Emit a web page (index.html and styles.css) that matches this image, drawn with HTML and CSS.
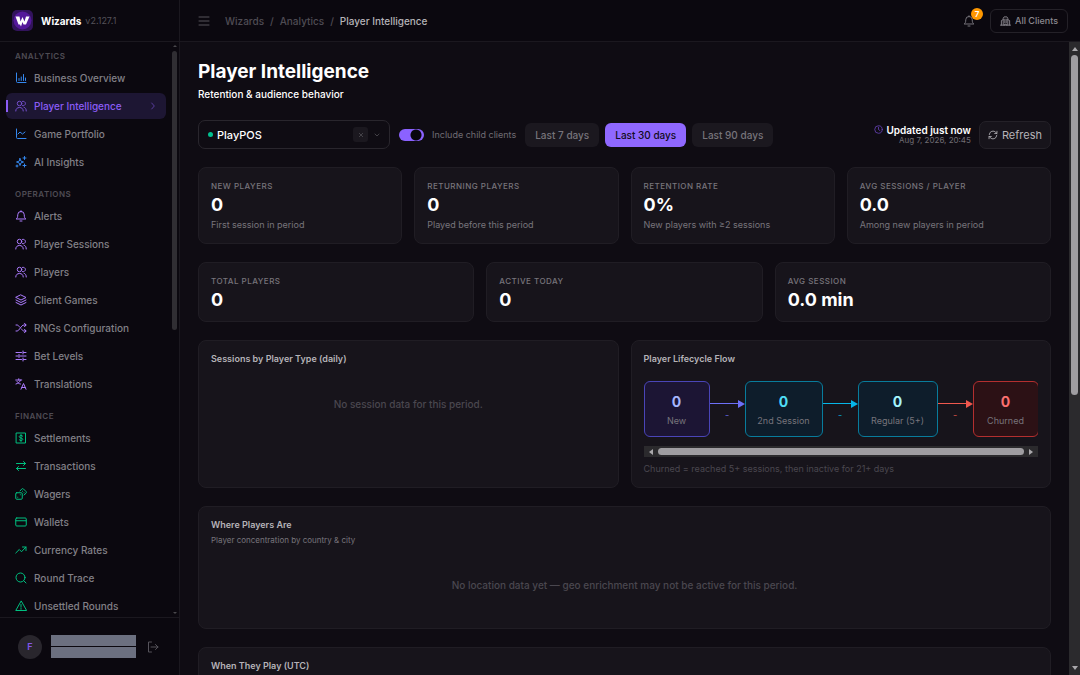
FILE: index.html
```html
<!DOCTYPE html>
<html lang="en">
<head>
<meta charset="utf-8">
<title>Player Intelligence</title>
<link rel="stylesheet" href="styles.css">
</head>
<body>
<svg class="sprite" aria-hidden="true">
  <symbol id="i-bars" viewBox="0 0 24 24"><path d="M3 2v17a2 2 0 0 0 2 2h17M8 17v-4M12.500 17v-7M17 17V5M21 17v-5"/></symbol>
  <symbol id="i-users" viewBox="0 0 24 24"><circle cx="9" cy="7" r="4.500"/><path d="M1.500 22c0-4.500 3-7 7.500-7s7.500 2.500 7.500 7M15 2.700a4.500 4.500 0 1 1 0 8.600M18 14.500c3 .8 4.500 3.500 4.500 7.500"/></symbol>
  <symbol id="i-line" viewBox="0 0 24 24"><path d="M3 2v17a2 2 0 0 0 2 2h17M6 12l4-4 5 4 5-4"/></symbol>
  <symbol id="i-spark" viewBox="0 0 24 24"><path d="M10 5l1.800 5.200L17 12l-5.200 1.800L10 19l-1.800-5.200L3 12l5.200-1.800zM19 1v6M16 4h6M19 16v6M16 19h6M4 18v4M2 20h4"/></symbol>
  <symbol id="i-bell" viewBox="0 0 24 24"><path d="M3 17.500c2-1.500 2.500-3.500 2.500-8a6.500 6.500 0 0 1 13 0c0 4.500.5 6.500 2.500 8zM10 22h4M12 1.500v2"/></symbol>
  <symbol id="i-layers" viewBox="0 0 24 24"><path d="M12 2l10 5-10 5L2 7zM2 12l10 5 10-5M2 17l10 5 10-5"/></symbol>
  <symbol id="i-shuffle" viewBox="0 0 24 24"><path d="M2 18h2c5 0 8-12 14-12h4M2 6h2c2 0 3.500 1.500 5 4M13 14c1.500 2.500 3 4 5 4h4M19 2.500L22 6l-3 3.500M19 14.500l3 3.500-3 3.500"/></symbol>
  <symbol id="i-sliders" viewBox="0 0 24 24"><path d="M2 5h11M17 5h5M2 12h4M10 12h12M2 19h11M17 19h5M16 2v6M8 9v6M16 16v6"/></symbol>
  <symbol id="i-translate" viewBox="0 0 24 24"><path d="M1.500 4h12M7.500 1.500V4M11 4c-1 4-4.500 7-9 8M4 7c1.500 3 4 4.500 7 5M12 22.500l5-11.500 5 11.500M13.500 19h7"/></symbol>
  <symbol id="i-receipt" viewBox="0 0 24 24"><path d="M3 2h18v20H3zM15.500 8.500c-.8-1-2-1.500-3.500-1.500-2 0-3.500.8-3.500 2.500C8.500 13 15.500 11 15.500 14.500c0 1.700-1.500 2.500-3.500 2.500-1.500 0-2.700-.5-3.500-1.500M12 5v14"/></symbol>
  <symbol id="i-swap" viewBox="0 0 24 24"><path d="M3 7h18M17 3l4 4-4 4M21 17H3M7 13l-4 4 4 4"/></symbol>
  <symbol id="i-dice" viewBox="0 0 24 24"><rect x="1.500" y="9.500" width="13" height="13" rx="2"/><path d="M10 6l3.500-4a2.500 2.500 0 0 1 3.500 0l5 5a2.500 2.500 0 0 1 0 3.500L18 14M5.500 18.500h.1M10.500 13.500h.1M15 6.500h.1M18 9.500h.1"/></symbol>
  <symbol id="i-card" viewBox="0 0 24 24"><rect x="1.500" y="4" width="21" height="16" rx="2"/><path d="M2 9.500h20"/></symbol>
  <symbol id="i-trend" viewBox="0 0 24 24"><path d="M1.500 18l7-7 4.500 4.500L22 6M15 6h7v7"/></symbol>
  <symbol id="i-search" viewBox="0 0 24 24"><circle cx="11" cy="11" r="9"/><path d="M17.500 17.500L22 22"/></symbol>
  <symbol id="i-alert" viewBox="0 0 24 24"><path d="M12 2.500L1.500 21h21zM12 9v5.500M12 17v1.500"/></symbol>
  <symbol id="i-chev" viewBox="0 0 24 24"><path d="M8 3l8 9-8 9"/></symbol>
  <symbol id="i-down" viewBox="0 0 24 24"><path d="M4 8l8 8 8-8"/></symbol>
  <symbol id="i-x" viewBox="0 0 24 24"><path d="M5 5l14 14M19 5L5 19"/></symbol>
  <symbol id="i-menu" viewBox="0 0 24 24"><path d="M2 4h20M2 12h20M2 20h20"/></symbol>
  <symbol id="i-logout" viewBox="0 0 24 24"><path d="M9 2H3v20h6M8 12h14M17 7l5 5-5 5"/></symbol>
  <symbol id="i-building" viewBox="0 0 24 24"><path d="M1 21h22M3 21V11l4-2M7 21V6l2-3h6l2 3v15M17 9l4 2v10M10.500 8v8M13.500 8v8M10 21v-2h4v2"/></symbol>
  <symbol id="i-clock" viewBox="0 0 24 24"><circle cx="12" cy="12" r="10"/><path d="M12 6v6l4 3"/></symbol>
  <symbol id="i-refresh" viewBox="0 0 24 24"><path d="M3 11a9 9 0 0 1 16-5l2.500 2.500M21.500 3v5.500H16M21 13a9 9 0 0 1-16 5l-2.500-2.500M2.500 21v-5.500H8"/></symbol>
</svg>

<div class="app">
  <aside class="sidebar">
    <div class="brand">
      <svg class="logo" viewBox="0 0 42 42" aria-hidden="true"><rect width="42" height="42" rx="10" fill="#32135c"/><circle cx="21" cy="21" r="18" fill="#54189a"/><path d="M7 13h8l2 10 4-9 4 9 3-10h7l-7 16h-5l-2-5-3 9-2-4-3 0z" fill="#fff"/></svg>
      <strong class="brand-name">Wizards</strong>
      <span class="version">v2.127.1</span>
    </div>
    <div class="nav-wrap">
      <nav class="nav">
        <section class="group blue">
          <h2>ANALYTICS</h2>
          <a href="#"><svg class="ico"><use href="#i-bars"/></svg>Business Overview</a>
          <a href="#" class="active" aria-current="page"><svg class="ico"><use href="#i-users"/></svg>Player Intelligence<svg class="ico chev"><use href="#i-chev"/></svg></a>
          <a href="#"><svg class="ico"><use href="#i-line"/></svg>Game Portfolio</a>
          <a href="#"><svg class="ico"><use href="#i-spark"/></svg>AI Insights</a>
        </section>
        <section class="group purple">
          <h2>OPERATIONS</h2>
          <a href="#"><svg class="ico"><use href="#i-bell"/></svg>Alerts</a>
          <a href="#"><svg class="ico"><use href="#i-users"/></svg>Player Sessions</a>
          <a href="#"><svg class="ico"><use href="#i-users"/></svg>Players</a>
          <a href="#"><svg class="ico"><use href="#i-layers"/></svg>Client Games</a>
          <a href="#"><svg class="ico"><use href="#i-shuffle"/></svg>RNGs Configuration</a>
          <a href="#"><svg class="ico"><use href="#i-sliders"/></svg>Bet Levels</a>
          <a href="#"><svg class="ico"><use href="#i-translate"/></svg>Translations</a>
        </section>
        <section class="group green">
          <h2>FINANCE</h2>
          <a href="#"><svg class="ico"><use href="#i-receipt"/></svg>Settlements</a>
          <a href="#"><svg class="ico"><use href="#i-swap"/></svg>Transactions</a>
          <a href="#"><svg class="ico"><use href="#i-dice"/></svg>Wagers</a>
          <a href="#"><svg class="ico"><use href="#i-card"/></svg>Wallets</a>
          <a href="#"><svg class="ico"><use href="#i-trend"/></svg>Currency Rates</a>
          <a href="#"><svg class="ico"><use href="#i-search"/></svg>Round Trace</a>
          <a href="#"><svg class="ico"><use href="#i-alert"/></svg>Unsettled Rounds</a>
        </section>
      </nav>
      <div class="side-bar" aria-hidden="true"><i class="tri up"></i><div class="track"><div class="thumb"></div></div><i class="tri down"></i></div>
    </div>
    <div class="account">
      <span class="avatar">F</span>
      <div class="masked"><span></span><span></span></div>
      <button class="plain" aria-label="Log out"><svg class="ico"><use href="#i-logout"/></svg></button>
    </div>
  </aside>

  <div class="page">
    <header class="topbar">
      <button class="plain menu" aria-label="Toggle menu"><svg class="ico"><use href="#i-menu"/></svg></button>
      <nav class="crumbs" aria-label="Breadcrumb"><a href="#">Wizards</a><span>/</span><a href="#">Analytics</a><span>/</span><b>Player Intelligence</b></nav>
      <button class="plain bell" aria-label="Notifications"><svg class="ico"><use href="#i-bell"/></svg><span class="badge">7</span></button>
      <button class="clients"><svg class="ico"><use href="#i-building"/></svg>All Clients</button>
    </header>

    <div class="scroll-area">
      <main class="content">
        <div class="heading">
          <h1>Player Intelligence</h1>
          <p>Retention &amp; audience behavior</p>
        </div>

        <div class="toolbar">
          <div class="client-pick">
            <span class="dot"></span>
            <select aria-label="Client"><option>PlayPOS</option></select>
            <button class="clear" aria-label="Clear client"><svg class="ico"><use href="#i-x"/></svg></button>
            <svg class="ico arrow"><use href="#i-down"/></svg>
          </div>
          <label class="switch"><input type="checkbox" role="switch" checked>Include child clients</label>
          <div class="ranges">
            <button>Last 7 days</button>
            <button class="on">Last 30 days</button>
            <button>Last 90 days</button>
          </div>
          <div class="updated">
            <strong><svg class="ico"><use href="#i-clock"/></svg>Updated just now</strong>
            <time>Aug 7, 2026, 20:45</time>
          </div>
          <button class="refresh"><svg class="ico"><use href="#i-refresh"/></svg>Refresh</button>
        </div>

        <div class="grid four">
          <section class="card stat"><h3>NEW PLAYERS</h3><strong>0</strong><p>First session in period</p></section>
          <section class="card stat"><h3>RETURNING PLAYERS</h3><strong>0</strong><p>Played before this period</p></section>
          <section class="card stat"><h3>RETENTION RATE</h3><strong>0%</strong><p>New players with ≥2 sessions</p></section>
          <section class="card stat"><h3>AVG SESSIONS / PLAYER</h3><strong>0.0</strong><p>Among new players in period</p></section>
        </div>

        <div class="grid three">
          <section class="card stat"><h3>TOTAL PLAYERS</h3><strong>0</strong></section>
          <section class="card stat"><h3>ACTIVE TODAY</h3><strong>0</strong></section>
          <section class="card stat"><h3>AVG SESSION</h3><strong>0.0 min</strong></section>
        </div>

        <div class="grid two">
          <section class="card">
            <h3 class="title">Sessions by Player Type (daily)</h3>
            <p class="empty">No session data for this period.</p>
          </section>
          <section class="card">
            <h3 class="title">Player Lifecycle Flow</h3>
            <div class="flow">
              <div class="node new"><b>0</b><span>New</span></div>
              <div class="link l-new"><svg viewBox="0 0 35 8"><path d="M0 3.500h30" stroke="currentColor" stroke-width="1"/><path d="M28 0l7 4-7 4z" fill="currentColor"/></svg><span>-</span></div>
              <div class="node second"><b>0</b><span>2nd Session</span></div>
              <div class="link l-second"><svg viewBox="0 0 35 8"><path d="M0 3.500h30" stroke="currentColor" stroke-width="1"/><path d="M28 0l7 4-7 4z" fill="currentColor"/></svg><span>-</span></div>
              <div class="node regular"><b>0</b><span>Regular (5+)</span></div>
              <div class="link l-churn"><svg viewBox="0 0 35 8"><path d="M0 3.500h30" stroke="currentColor" stroke-width="1"/><path d="M28 0l7 4-7 4z" fill="currentColor"/></svg><span>-</span></div>
              <div class="node churned"><b>0</b><span>Churned</span></div>
            </div>
            <div class="h-bar" aria-hidden="true"><i class="tri left"></i><div class="thumb"></div><i class="tri right"></i></div>
            <p class="note">Churned = reached 5+ sessions, then inactive for 21+ days</p>
          </section>
        </div>

        <section class="card">
          <h3 class="title">Where Players Are</h3>
          <p class="sub">Player concentration by country &amp; city</p>
          <p class="empty geo">No location data yet — geo enrichment may not be active for this period.</p>
        </section>

        <section class="card">
          <h3 class="title">When They Play (UTC)</h3>
          <p class="empty geo"></p>
        </section>
      </main>
      <div class="v-bar" aria-hidden="true"><i class="tri up"></i><div class="track"><div class="thumb"></div></div><i class="tri down"></i></div>
    </div>
  </div>
</div>
</body>
</html>
```
FILE: styles.css
```css
* { box-sizing: border-box; }
body, h1, h2, h3, p { margin: 0; }
body {
  background: #0f0c13;
  color: #fff;
  font-family: Inter, "Liberation Sans", sans-serif;
  font-size: 9px;
  line-height: 12px;
}
button, select, input { font: inherit; color: inherit; margin: 0; }
button { border: 0; background: none; padding: 0; display: flex; align-items: center; }
a { color: inherit; text-decoration: none; }
.sprite { display: none; }
.ico {
  width: 12px;
  height: 12px;
  flex: none;
  fill: none;
  stroke: currentColor;
  stroke-width: 2;
  stroke-linecap: round;
  stroke-linejoin: round;
}
.app { display: flex; height: 100vh; overflow: hidden; }

/* Sidebar */
.sidebar {
  width: 180px;
  flex: none;
  display: flex;
  flex-direction: column;
  background: #0b080f;
  border-right: 1px solid #1b181f;
}
.brand {
  height: 42px;
  flex: none;
  display: flex;
  align-items: center;
  padding: 0 12px;
  border-bottom: 1px solid #1b181f;
}
.logo { width: 21px; height: 21px; margin-right: 8px; }
.brand-name { font-size: 10px; margin-right: 4px; }
.version { color: #55525a; }
.nav-wrap { flex: 1; min-height: 0; display: flex; }
.nav { flex: 1; overflow: hidden; padding: 8px 6px 0; }
.group { display: flex; flex-direction: column; gap: 2px; margin-bottom: 13px; }
.group h2 {
  font-size: 8px;
  font-weight: 600;
  letter-spacing: 0.06em;
  color: #4f4c54;
  padding: 0 9px;
  margin-bottom: 1px;
}
.group a {
  position: relative;
  height: 26px;
  display: flex;
  align-items: center;
  gap: 7px;
  padding: 0 9px;
  border-radius: 6px;
  font-size: 10px;
  font-weight: 500;
  color: #828087;
}
.blue .ico { color: #3488f0; }
.purple .ico { color: #ad7cff; }
.green .ico { color: #00c080; }
.group .active { color: #8c5cf6; background: #1d1633; }
.group .active::before {
  content: "";
  position: absolute;
  left: 0;
  top: 7px;
  width: 2px;
  height: 12px;
  background: #8c5cf6;
}
.group .active .ico { color: #7650d0; }
.group .active .chev { width: 8px; height: 8px; margin-left: auto; }

.tri { width: 0; height: 0; border: 3px solid transparent; flex: none; }
.tri.up { border-bottom: 4px solid #aaa8ac; border-top: 0; }
.tri.down { border-top: 4px solid #aaa8ac; border-bottom: 0; }
.tri.left { border-right: 4px solid #aaa8ac; border-left: 0; }
.tri.right { border-left: 4px solid #aaa8ac; border-right: 0; }
.side-bar {
  width: 6px;
  display: flex;
  flex-direction: column;
  align-items: center;
  gap: 4px;
  padding: 3px 0;
  margin-right: 1px;
}
.side-bar .tri { border-width: 2px; border-top-color: transparent; border-bottom-color: transparent; }
.side-bar .up { border-top: 0; border-bottom: 2px solid #4a484d; }
.side-bar .down { border-bottom: 0; border-top: 2px solid #4a484d; }
.track { flex: 1; width: 100%; }
.side-bar .thumb { height: 50%; width: 5px; border-radius: 3px; background: #302e33; }

.account {
  height: 58px;
  flex: none;
  display: flex;
  align-items: center;
  padding: 0 18px;
  border-top: 1px solid #1b181f;
}
.avatar {
  width: 24px;
  height: 24px;
  border-radius: 50%;
  display: grid;
  place-items: center;
  background: #29262d;
  color: #8457ec;
  font-weight: 600;
  margin-right: 9px;
}
.masked { width: 85px; display: grid; gap: 1px; margin-right: 11px; }
.masked span { height: 11px; background: #6c7080; }
.plain { color: #56535b; }

/* Top bar */
.page { flex: 1; min-width: 0; display: flex; flex-direction: column; }
.topbar {
  height: 42px;
  flex: none;
  display: flex;
  align-items: center;
  padding: 0 12px 0 18px;
  background: #0b080f;
  border-bottom: 1px solid #1b181f;
}
.menu { margin-right: 15px; }
.crumbs { display: flex; gap: 6px; font-size: 10px; font-weight: 500; color: #4f4c54; flex: 1; }
.crumbs b { font-weight: 500; color: #b5b3b8; }
.bell { position: relative; margin-right: 15px; color: #77747b; }
.badge {
  position: absolute;
  left: 8px;
  top: -7px;
  width: 12px;
  height: 12px;
  border-radius: 50%;
  background: #ff9800;
  color: #fff;
  font-size: 8px;
  font-weight: 600;
  text-align: center;
}
.clients {
  height: 24px;
  gap: 4px;
  padding: 0 9px;
  border: 1px solid #242128;
  border-radius: 6px;
  color: #8b888f;
  font-weight: 500;
}
.clients .ico { width: 11px; }

/* Content */
.scroll-area { flex: 1; min-height: 0; display: flex; }
.content {
  flex: 1;
  min-width: 0;
  overflow: hidden;
  display: flex;
  flex-direction: column;
  gap: 18px;
  padding: 18px 18px 0;
}
.content > * { flex: none; }
.v-bar {
  width: 11px;
  display: flex;
  flex-direction: column;
  align-items: center;
  gap: 4px;
  padding: 5px 0;
  background: #2b2a2d;
}
.v-bar .thumb { width: 7px; height: 56%; margin: 0 auto; border-radius: 4px; background: #9f9da1; }

.heading { padding-bottom: 1px; }
.heading h1 { font-size: 19px; line-height: 24px; font-weight: 700; }
.heading p { font-size: 10px; font-weight: 500; line-height: 14px; margin-top: 3px; }

.toolbar { display: flex; align-items: center; height: 29px; }
.client-pick {
  width: 192px;
  height: 29px;
  display: flex;
  align-items: center;
  padding: 0 9px;
  border: 1px solid #29262d;
  border-radius: 7px;
}
.dot { width: 5px; height: 5px; border-radius: 50%; background: #00c090; margin-right: 4px; }
.client-pick select {
  flex: 1;
  min-width: 0;
  appearance: none;
  border: 0;
  background: none;
  padding: 0;
  font-size: 11px;
  font-weight: 500;
}
.clear { width: 15px; height: 15px; justify-content: center; border-radius: 3px; background: #1b181f; color: #6f6c73; margin-right: 6px; }
.clear .ico, .arrow { width: 6px; height: 6px; }
.arrow { color: #77747b; }
.switch { display: flex; align-items: center; gap: 8px; margin: 0 9px; color: #6f6c73; }
.switch input {
  appearance: none;
  width: 25px;
  height: 12px;
  border-radius: 6px;
  background: radial-gradient(circle at 17px 6px, #09060d 5px, transparent 6px), #8b62ff;
}
.ranges { display: flex; gap: 6px; }
.ranges button {
  height: 24px;
  padding: 0 10px;
  border-radius: 6px;
  background: #1b181f;
  color: #77747b;
  font-size: 10px;
  font-weight: 500;
}
.ranges .on { background: #8f68ff; color: #120c20; }
.updated { margin-left: auto; text-align: right; line-height: 10px; font-size: 8px; color: #6f6c73; }
.updated strong { display: flex; align-items: center; gap: 3px; font-size: 10px; font-weight: 600; color: #fff; }
.updated .ico { width: 9px; height: 9px; color: #6d48c4; }
.updated time { display: block; }
.refresh {
  height: 28px;
  margin-left: 8px;
  padding: 0 8px;
  gap: 4px;
  border: 1px solid #242128;
  border-radius: 7px;
  background: #17141b;
  color: #b5b3b8;
  font-size: 11px;
}
.refresh .ico { width: 10px; height: 10px; }

.grid { display: grid; gap: 12px; }
.four { grid-template-columns: repeat(4, 1fr); }
.three { grid-template-columns: repeat(3, 1fr); }
.two { grid-template-columns: repeat(2, minmax(0, 1fr)); }
.card { padding: 12px; border: 1px solid #201d24; border-radius: 8px; background: #17141b; }
.stat h3 { font-size: 8px; font-weight: 500; letter-spacing: 0.06em; color: #77747b; }
.stat strong { display: block; font-size: 18px; line-height: 20px; margin-top: 3px; }
.stat { padding-bottom: 11px; }
.stat p { color: #77747b; margin-top: 4px; padding-bottom: 1px; }
.title { font-size: 9px; font-weight: 600; color: #b5b3b8; }
.empty { padding: 32px 0 64px; text-align: center; font-size: 10px; font-weight: 500; line-height: 14px; color: #4a474f; }
.sub { margin-top: 3px; font-size: 8px; color: #77747b; }
.geo { padding: 32px 0 24px; }

.flow { display: flex; overflow: hidden; margin-top: 16px; }
.node {
  height: 56px;
  flex: none;
  display: flex;
  flex-direction: column;
  align-items: center;
  justify-content: center;
  gap: 5px;
  padding-top: 2px;
  border: 1px solid;
  border-radius: 6px;
  white-space: nowrap;
}
.node b { font-size: 14px; line-height: 16px; }
.node span { color: #77747b; }
.new { width: 66px; border-color: #4a45b8; background: #1c1534; }
.new b { color: #a5b4fc; }
.second { width: 78px; border-color: #087c9c; background: #0e1d2b; }
.second b { color: #4fdcf5; }
.regular { width: 80px; border-color: #087c9c; background: #0e1d2b; }
.regular b { color: #a5f3fc; }
.churned { width: 66px; border-color: #b42f2f; background: #2c1115; }
.churned b { color: #fb6f6f; }
.link { width: 35px; flex: none; display: flex; flex-direction: column; align-items: center; padding-top: 19px; }
.link svg { width: 35px; height: 8px; margin-bottom: 1px; }
.l-new { color: #6d70f8; }
.l-second { color: #06b6e8; }
.l-churn { color: #f0584e; }
.link span { opacity: .7; font-weight: 600; }
.h-bar { display: flex; align-items: center; gap: 5px; height: 11px; margin-top: 9px; padding: 0 5px; background: #2b2a2d; }
.h-bar .thumb { flex: 1; height: 7px; border-radius: 4px; background: #9f9da1; }
.note { margin-top: 6px; color: #4a474f; }
```
